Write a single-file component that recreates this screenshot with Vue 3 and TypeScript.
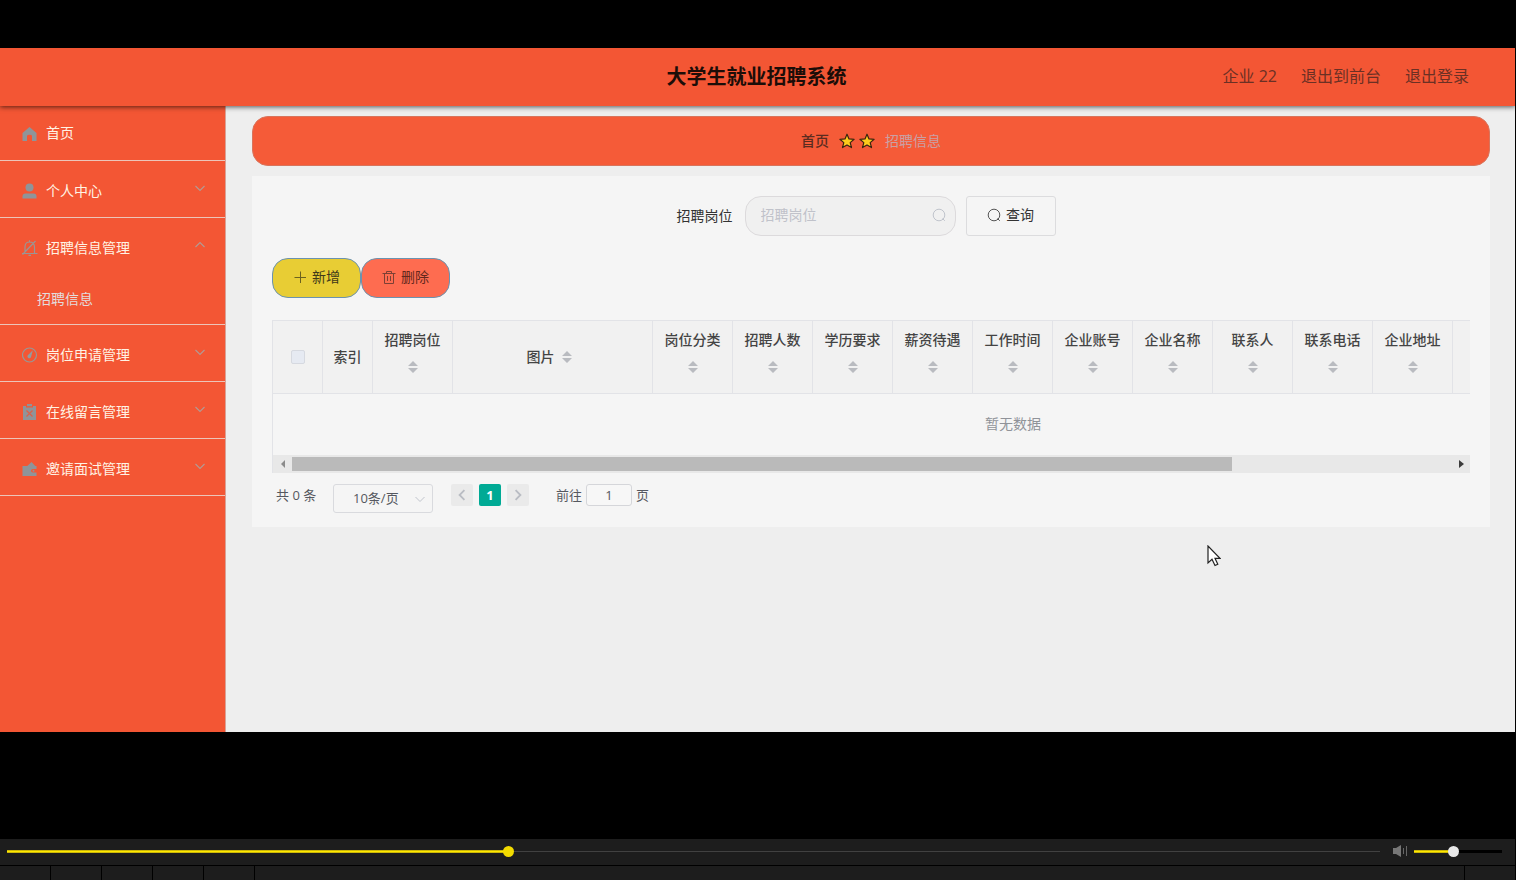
<script setup lang="ts">
import { computed, ref } from 'vue'

interface MenuItem {
  title: string
  icon: string
  expandable: boolean
  children?: string[]
}

interface Column {
  title: string
  width: number
  sortable: boolean
}

const menu: MenuItem[] = [
  { title: '首页', icon: 'home', expandable: false },
  { title: '个人中心', icon: 'user', expandable: true },
  { title: '招聘信息管理', icon: 'bell', expandable: true, children: ['招聘信息'] },
  { title: '岗位申请管理', icon: 'compass', expandable: true },
  { title: '在线留言管理', icon: 'board', expandable: true },
  { title: '邀请面试管理', icon: 'wallet', expandable: true },
]

const columns: Column[] = [
  { title: '索引', width: 50, sortable: false },
  { title: '招聘岗位', width: 80, sortable: true },
  { title: '图片', width: 200, sortable: true },
  { title: '岗位分类', width: 80, sortable: true },
  { title: '招聘人数', width: 80, sortable: true },
  { title: '学历要求', width: 80, sortable: true },
  { title: '薪资待遇', width: 80, sortable: true },
  { title: '工作时间', width: 80, sortable: true },
  { title: '企业账号', width: 80, sortable: true },
  { title: '企业名称', width: 80, sortable: true },
  { title: '联系人', width: 80, sortable: true },
  { title: '联系电话', width: 80, sortable: true },
  { title: '企业地址', width: 80, sortable: true },
  { title: '', width: 300, sortable: false },
]

const isStacked = (column: Column) => column.sortable && column.width <= 80

const keyword = ref('')
const page = ref('1')
const progress = ref(364)
const volume = ref(440)

const progressStyle = computed(() => ({ '--fill': `${progress.value / 10}%` }))
const volumeStyle = computed(() => ({ '--fill': `${volume.value / 10}%` }))
</script>

<template>
  <div class="player">
    <div class="screen">
      <header class="top">
        <h1>大学生就业招聘系统</h1>
        <nav class="links">
          <span>企业 22</span>
          <a href="#">退出到前台</a>
          <a href="#">退出登录</a>
        </nav>
      </header>

      <div class="body">
        <aside class="side">
          <div v-for="item in menu" :key="item.title" class="group">
            <a href="#" class="entry">
              <svg class="icon" viewBox="0 0 16 16">
                <path v-if="item.icon === 'home'" fill="#8f9499" d="M7.500 2 L14.500 8 V16 H10 V11 Q10 9.800 7.500 9.800 Q5 9.800 5 11 V16 H.5 V8 Z" />
                <g v-else-if="item.icon === 'user'" fill="#8f9499">
                  <circle cx="7.500" cy="4.500" r="4" />
                  <path d="M.5 15.500 V13.500 Q.5 10.500 3.500 10.500 H11.500 Q14.500 10.500 14.500 13.500 V15.500 Z" />
                </g>
                <g v-else-if="item.icon === 'bell'" fill="none" stroke="#9a9694" stroke-width="1.200">
                  <path d="M0 13.500 H15.500 M3 13.500 V7 Q3 2 7.500 2 Q12.500 2 12.500 7 V13.500 M7.500 .3 V2 M6.500 15.300 H9 M.5 14.500 L13.500 1" />
                </g>
                <g v-else-if="item.icon === 'compass'">
                  <circle cx="7.500" cy="8" r="7" fill="none" stroke="#9a9694" stroke-width="1.200" />
                  <path fill="#959a9d" d="M10.800 3.300 L9.200 9.500 A1.900 1.900 0 1 1 6.300 7.700 Z" />
                </g>
                <g v-else-if="item.icon === 'board'">
                  <path fill="#8f9499" d="M1 2 H4 V3.500 H11 V2 H14 V16 H1 Z M5 0 H10 V2.300 H5 Z" />
                  <path stroke="#d9614a" stroke-width="1.200" d="M4.500 6.500 L10.500 12.500 M10.500 6.500 L4.500 12.500" />
                </g>
                <g v-else>
                  <path fill="#8f9499" d="M5 5.200 L9.500 1 L13.500 5.200 Z M.5 5 H14.500 V8 H11 Q9 8 9 9.800 Q9 11.500 11 11.500 H14.500 V15 H.5 Z" />
                  <circle cx="11.500" cy="9.800" r="1" fill="#8f9499" />
                </g>
              </svg>
              <span class="name">{{ item.title }}</span>
              <svg v-if="item.expandable" class="arrow" viewBox="0 0 10 10">
                <path :d="item.children ? 'M.5 7 L5 2.500 L9.500 7' : 'M.5 3 L5 7.500 L9.500 3'" fill="none" stroke="#b39a94" stroke-width="1.100" />
              </svg>
            </a>
            <a v-for="child in item.children" :key="child" href="#" class="child">{{ child }}</a>
          </div>
        </aside>

        <main class="main">
          <nav class="crumbs">
            <a href="#" class="crumb-home">首页</a>
            <span class="stars">
              <svg v-for="n in 2" :key="n" viewBox="0 0 16 16">
                <path d="M8 1.200 L10 5.900 L15.100 6.300 L11.200 9.600 L12.500 14.600 L8 11.900 L3.500 14.600 L4.800 9.600 L.9 6.300 L6 5.900 Z" fill="#fdcb1c" stroke="#3b2411" stroke-width="1.200" stroke-linejoin="round" />
              </svg>
            </span>
            <span class="crumb-here">招聘信息</span>
          </nav>

          <section class="panel">
            <form class="search" @submit.prevent>
              <label for="post">招聘岗位</label>
              <span class="field">
                <input id="post" v-model="keyword" type="text" placeholder="招聘岗位">
                <svg viewBox="0 0 14 14"><path d="M10.500 10.500 L12.800 12.800 M12.800 7 A5.800 5.800 0 1 1 7 1.200 A5.800 5.800 0 0 1 12.800 7 Z" fill="none" stroke="#c0c4cc" /></svg>
              </span>
              <button type="submit" class="query">
                <svg viewBox="0 0 14 14"><path d="M10.500 10.500 L12.800 12.800 M12.800 7 A5.800 5.800 0 1 1 7 1.200 A5.800 5.800 0 0 1 12.800 7 Z" fill="none" stroke="#555" /></svg>
                查询
              </button>
            </form>

            <div class="actions">
              <button type="button" class="add">
                <svg viewBox="0 0 14 14"><path d="M7.500 1.500 V13 M1.500 7.500 H13" fill="none" stroke="#6c621f" /></svg>
                新增
              </button>
              <button type="button" class="remove">
                <svg viewBox="0 0 14 14"><path d="M.5 3.500 H13.500 M4.500 3.500 V1.500 H9.500 V3.500 M2.500 3.500 V13.500 H11.500 V3.500 M5.500 6 V11 M8.500 6 V11" fill="none" stroke="#7d4035" /></svg>
                删除
              </button>
            </div>

            <div class="grid">
              <div class="viewport">
                <table>
                  <colgroup>
                    <col class="check-col">
                    <col v-for="(column, i) in columns" :key="i" :style="{ width: column.width + 'px' }">
                  </colgroup>
                  <thead>
                    <tr>
                      <th><input type="checkbox" aria-label="全选"></th>
                      <th v-for="(column, i) in columns" :key="i" :class="{ stacked: isStacked(column) }">
                        <span class="caption">{{ column.title }}</span>
                        <span v-if="column.sortable" class="sort">
                          <svg viewBox="0 0 10 12"><path d="M5 0 L10 5 H0 Z M0 7 H10 L5 12 Z" fill="#b9bbc0" /></svg>
                        </span>
                      </th>
                    </tr>
                  </thead>
                  <tbody>
                    <tr><td :colspan="columns.length + 1">暂无数据</td></tr>
                  </tbody>
                </table>
              </div>
              <div class="scroll">
                <svg viewBox="0 0 18 18"><path d="M12 5 V13 L8 9 Z" fill="#8b8b8b" /></svg>
                <div class="rail"><div class="grip"></div></div>
                <svg viewBox="0 0 18 18"><path d="M7 5 V13 L12 9 Z" fill="#3c3c3c" /></svg>
              </div>
            </div>

            <div class="pager">
              <span class="total">共 0 条</span>
              <span class="size">
                <select aria-label="每页条数"><option>10条/页</option></select>
                <svg viewBox="0 0 10 10"><path d="M.5 3 L5 7.500 L9.500 3" fill="none" stroke="#c0c4cc" /></svg>
              </span>
              <button type="button" class="step" aria-label="上一页" disabled>
                <svg viewBox="0 0 10 10"><path d="M7 1 L3 5 L7 9" fill="none" stroke="#b9bcc3" stroke-width="1.500" /></svg>
              </button>
              <button type="button" class="step current">1</button>
              <button type="button" class="step" aria-label="下一页" disabled>
                <svg viewBox="0 0 10 10"><path d="M3 1 L7 5 L3 9" fill="none" stroke="#b9bcc3" stroke-width="1.500" /></svg>
              </button>
              <label class="jump">前往<input v-model="page" type="text">页</label>
            </div>
          </section>
        </main>
      </div>
      <svg class="pointer" viewBox="0 0 14 22">
        <path d="M1 1 V18 L5 14.300 L8 20.500 L10.800 19.200 L8 13.300 H13 Z" fill="#fff" stroke="#222" stroke-width="1.200" />
      </svg>
    </div>

    <div class="timeline">
      <input v-model.number="progress" class="seek" type="range" min="0" max="1000" aria-label="播放进度" :style="progressStyle">
      <svg class="speaker" viewBox="0 0 16 12">
        <path d="M0 3 H3 L8 0 V12 L3 9 H0 Z" fill="#777" />
        <path d="M10.500 3 V9 M13.500 1 V11" stroke="#666" />
      </svg>
      <input v-model.number="volume" class="volume" type="range" min="0" max="1000" aria-label="音量" :style="volumeStyle">
    </div>
    <div class="controls">
      <span v-for="n in 5" :key="n" class="slot"></span>
      <span class="slot last"></span>
    </div>
  </div>
</template>

<style>
body {
  margin: 0;
  background: #000;
}
</style>

<style scoped>
.player,
.player * {
  box-sizing: border-box;
}
.player {
  display: flex;
  flex-direction: column;
  min-height: 100vh;
  padding-top: 48px;
  background: #000;
  color: #333;
  font: 14px/20px "Open Sans", "Noto Sans CJK SC", sans-serif;
}
button,
input,
select {
  font: inherit;
  color: inherit;
  margin: 0;
}
a {
  color: inherit;
  text-decoration: none;
}
svg {
  display: block;
  flex: none;
}
.screen {
  position: relative;
  display: flex;
  flex: 1;
  flex-direction: column;
  margin: 0 1px 107px 0;
  background: #eee;
}
.top {
  position: relative;
  z-index: 1;
  display: grid;
  grid-template-columns: 1fr auto 1fr;
  align-items: center;
  height: 58px;
  padding: 0 46px 0 44px;
  background: #f35634;
  box-shadow: 0 1px 5px rgba(0, 0, 0, .65);
}
.top h1 {
  grid-column: 2;
  margin: 0;
  color: #1c0d08;
  font-size: 20px;
  line-height: 28px;
  font-weight: 700;
}
.links {
  display: flex;
  justify-content: flex-end;
  gap: 24px;
  padding-bottom: 2px;
  color: #6b3024;
  font-size: 16px;
  line-height: 24px;
}
.body {
  display: flex;
  flex: 1;
}
.side {
  flex: none;
  width: 226px;
  border-right: 1px solid #d8a297;
  background: #f35634;
}
.group {
  border-bottom: 1px solid #ecc5b9;
}
.entry {
  display: flex;
  align-items: center;
  height: 56px;
  padding: 4px 20px 0 22px;
  color: #fff3e4;
}
.group:first-child .entry {
  height: 54px;
  padding-top: 0;
}
.icon {
  width: 16px;
  height: 16px;
  margin-right: 8px;
}
.name {
  flex: 1;
}
.arrow {
  width: 10px;
  height: 10px;
  margin-bottom: 6px;
}
.child {
  display: block;
  height: 50px;
  padding-left: 37px;
  color: #e3dcdc;
  line-height: 50px;
}
.main {
  flex: 1;
  min-width: 0;
  padding: 10px 25px 0 26px;
}
.crumbs {
  display: flex;
  align-items: center;
  justify-content: center;
  gap: 10px;
  height: 50px;
  margin-bottom: 10px;
  border: 1px solid #d8745c;
  border-radius: 16px;
  background: #f55b38;
}
.crumb-home {
  color: #5b2c20;
  font-weight: 500;
}
.crumb-here {
  color: #c9a0a4;
}
.stars {
  display: flex;
  gap: 4px;
}
.stars svg {
  width: 16px;
  height: 16px;
}
.panel {
  padding: 20px 20px 14px;
  background: #f5f5f5;
}
.search {
  display: flex;
  align-items: center;
  justify-content: center;
  gap: 10px;
  padding-right: 10px;
}
.search label {
  margin-right: 2px;
}
.field {
  display: flex;
  align-items: center;
  width: 211px;
  height: 40px;
  padding: 0 9px 2px 15px;
  border: 1px solid #dcdadc;
  border-radius: 16px;
  background: #f0f0f0;
}
.field input {
  flex: 1;
  min-width: 0;
  padding: 0;
  border: 0;
  outline: 0;
  background: none;
}
.field input::placeholder {
  color: #c0c2ca;
  opacity: 1;
}
.field svg,
.query svg,
.actions svg {
  width: 14px;
  height: 14px;
}
.query,
.actions button {
  display: flex;
  align-items: center;
  justify-content: center;
  gap: 5px;
  width: 90px;
  height: 40px;
  padding: 0 0 2px;
  border: 1px solid #dcdcde;
  border-radius: 3px;
  background: #f5f5f5;
}
.actions {
  display: flex;
  margin: 22px 0;
}
.actions button {
  width: 89px;
  border-color: #6b93b0;
  border-radius: 16px;
}
.actions .add {
  background: #e8cd34;
  color: #40391a;
}
.actions .remove {
  background: #fe6c50;
  color: #64281d;
}
.grid {
  overflow: hidden;
  border: 1px solid #e2e3e7;
  border-right: 0;
  border-bottom: 0;
}
.viewport {
  overflow: hidden;
}
table {
  width: 1480px;
  table-layout: fixed;
  border-collapse: separate;
  border-spacing: 0;
}
.check-col {
  width: 50px;
}
th {
  height: 73px;
  padding: 0 0 2px;
  border-right: 1px solid #e2e3e7;
  border-bottom: 1px solid #e2e3e7;
  background: #f1f1f1;
  color: #444;
  font-weight: 500;
  line-height: 26px;
  text-align: center;
}
.stacked {
  padding: 0 10px 10px;
}
.caption,
.sort {
  display: inline-block;
  vertical-align: middle;
}
.sort {
  width: 24px;
}
.sort svg {
  width: 10px;
  height: 12px;
  margin: 0 auto;
}
th input {
  appearance: none;
  display: block;
  width: 14px;
  height: 14px;
  margin: 2px auto 0;
  border: 1px solid #d6d9e0;
  border-radius: 2px;
  background: #e6eaf2;
}
td {
  height: 61px;
  padding: 0 0 2px;
  color: #909399;
  text-align: center;
}
.scroll {
  display: flex;
  align-items: center;
  height: 18px;
  background: #e8e8e8;
}
.scroll svg {
  width: 18px;
  height: 18px;
}
.rail {
  flex: 1;
  padding-left: 1px;
}
.grip {
  width: 81%;
  height: 14px;
  background: #bababa;
}
.pager {
  display: flex;
  align-items: flex-start;
  padding: 11px 4px 0;
  color: #555860;
  font-size: 13px;
  line-height: 22px;
}
.total {
  width: 57px;
}
.size {
  display: grid;
  width: 100px;
  margin-right: 18px;
}
.size select,
.size svg {
  grid-area: 1 / 1;
}
.size select {
  appearance: none;
  width: 100px;
  height: 29px;
  padding: 0 0 2px 19px;
  border: 1px solid #d9dade;
  border-radius: 3px;
  background: #f5f5f5;
}
.size svg {
  align-self: center;
  justify-self: end;
  width: 10px;
  height: 10px;
  margin-right: 8px;
  pointer-events: none;
}
.step {
  display: flex;
  align-items: center;
  justify-content: center;
  width: 22px;
  height: 22px;
  margin-right: 6px;
  padding: 0;
  border: 0;
  border-radius: 2px;
  background: #eaeaea;
}
.step svg {
  width: 12px;
  height: 12px;
}
.step.current {
  background: #00aa95;
  color: #fff;
  font-weight: 700;
}
.jump {
  display: flex;
  align-items: center;
  gap: 4px;
  margin-left: 21px;
}
.jump input {
  width: 46px;
  height: 22px;
  padding: 0;
  border: 1px solid #d5d6da;
  border-radius: 3px;
  background: #f7f7f7;
  text-align: center;
}
.pointer {
  position: absolute;
  top: 497px;
  left: 1207px;
  z-index: 2;
  width: 14px;
  height: 22px;
}
.timeline {
  display: flex;
  align-items: center;
  height: 26px;
  margin-right: 1px;
  padding: 0 13px 2px 7px;
  background: #1d1d1d;
}
.timeline input {
  --rest: #414141;
  appearance: none;
  min-width: 0;
  height: 11px;
  background:
    linear-gradient(#b39f0b, #ffe900 50%, #b39f0b) 0 50% / var(--fill) 3px no-repeat,
    linear-gradient(var(--rest), var(--rest)) 0 50% / 100% var(--line) no-repeat;
}
.timeline input::-webkit-slider-thumb {
  appearance: none;
  width: 11px;
  height: 11px;
  border-radius: 50%;
  background: var(--knob);
}
.timeline .seek {
  --line: 1px;
  --knob: #f2db00;
  flex: 1;
}
.timeline .volume {
  --rest: #000;
  --line: 3px;
  --knob: #e8e8e8;
  width: 88px;
}
.speaker {
  width: 16px;
  height: 12px;
  margin: 0 5px 0 13px;
}
.controls {
  display: flex;
  height: 15px;
  margin-right: 1px;
  border-top: 1px solid #000;
  background: #1d1d1d;
}
.slot {
  width: 51px;
  border-right: 1px solid #000;
}
.slot.last {
  margin-left: auto;
  border-right: 0;
  border-left: 1px solid #000;
}
</style>
